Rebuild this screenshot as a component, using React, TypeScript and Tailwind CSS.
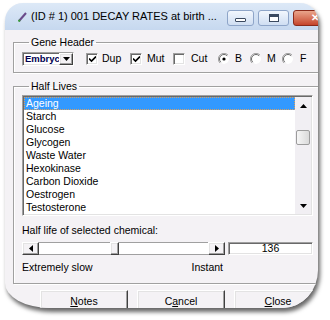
import React from 'react';

const items = [
  'Ageing',
  'Starch',
  'Glucose',
  'Glycogen',
  'Waste Water',
  'Hexokinase',
  'Carbon Dioxide',
  'Oestrogen',
  'Testosterone',
];

// classic sunken 3d edge
const sunken =
  'border border-t-[#a0a0a0] border-l-[#a0a0a0] border-r-white border-b-white shadow-[inset_1px_1px_0_#696969,inset_-1px_-1px_0_#e3e3e3]';
// classic raised 3d edge
const raised =
  'border border-t-white border-l-white border-r-[#404040] border-b-[#404040] shadow-[inset_-1px_-1px_0_#a0a0a0,inset_1px_1px_0_#e3e3e3]';

const Check = ({ checked }: { checked?: boolean }) => (
  <span className={`shrink-0 w-[12px] h-[12px] bg-white flex items-center justify-center ${sunken}`}>
    {checked && (
      <svg width="7" height="7" viewBox="0 0 7 7">
        <path d="M0 2.5 L2.5 5 L7 0.5" stroke="#000" strokeWidth="1.6" fill="none" />
      </svg>
    )}
  </span>
);

const Radio = ({ checked }: { checked?: boolean }) => (
  <svg width="12" height="12" viewBox="0 0 12 12" className="shrink-0">
    <circle cx="6" cy="6" r="5" fill="#fff" />
    <path d="M10 2 A5.5 5.5 0 0 0 2 10" stroke="#a0a0a0" strokeWidth="1" fill="none" />
    <path d="M9.2 2.8 A4.5 4.5 0 0 0 2.8 9.2" stroke="#696969" strokeWidth="1" fill="none" />
    <path d="M2 10 A5.5 5.5 0 0 0 10 2" stroke="#f4f2f5" strokeWidth="1" fill="none" />
    {checked && <circle cx="6" cy="6" r="1.6" fill="#000" />}
  </svg>
);

const Tri = ({ dir }: { dir: 'up' | 'down' | 'left' | 'right' }) => {
  const d = {
    up: 'M3.5 0 L7 4 L0 4 Z',
    down: 'M0 0 L7 0 L3.5 4 Z',
    left: 'M4 0 L4 7 L0 3.5 Z',
    right: 'M0 0 L4 3.5 L0 7 Z',
  }[dir];
  const vert = dir === 'up' || dir === 'down';
  return (
    <svg width={vert ? 7 : 4} height={vert ? 4 : 7} viewBox={vert ? '0 0 7 4' : '0 0 4 7'}>
      <path d={d} fill="#000" />
    </svg>
  );
};

const Btn = ({ children }: { children: React.ReactNode }) => (
  <div className={`w-[88px] h-[23px] flex items-center justify-center bg-[#f4f2f5] ${raised}`}>
    {children}
  </div>
);

export default function App() {
  return (
    <div className="w-[330px] h-[320px] bg-white overflow-hidden font-['Liberation_Sans',Arial,sans-serif] text-[10.5px] text-black">
      <div className="ml-[5px] mt-[3px] w-[313px] h-[305px] overflow-hidden bg-[#f4f2f5] rounded-tl-[18px] rounded-tr-[18px] rounded-bl-[45px_25px] rounded-br-[35px_38px] shadow-[2px_4px_4px_rgba(0,0,0,0.6)]">
        <div className="w-[331px]">
          {/* Title bar */}
          <div className="h-[27px] bg-linear-to-b from-[#dde9f7] to-[#c6d8ef] flex items-center">
            <svg width="9" height="10" viewBox="0 0 9 10" className="ml-[13px]">
              <path d="M8 1 L1 9" stroke="#6a4a8a" strokeWidth="2" />
              <path d="M2 8 L0.5 9.5" stroke="#3a9a3a" strokeWidth="2" />
            </svg>
            <span className="ml-[4px] text-[11px] whitespace-nowrap">(ID # 1) 001 DECAY RATES at birth ...</span>
            <div className="ml-auto flex items-start gap-[4px] self-start mt-[7px]">
              <div className="w-[27px] h-[16px] rounded-[3px] border border-[#8ea5c8] bg-linear-to-b from-[#f2f7fd] to-[#cfdef2] flex items-end justify-center pb-[3px]">
                <div className="w-[11px] h-[4px] border border-[#3b4a60] bg-white rounded-[1px]" />
              </div>
              <div className="w-[31px] h-[16px] rounded-[3px] border border-[#8ea5c8] bg-linear-to-b from-[#f2f7fd] to-[#cfdef2] flex items-center justify-center">
                <div className="w-[10px] h-[8px] border border-[#3b4a60] bg-white shadow-[inset_0_2px_0_#3b4a60]" />
              </div>
              <div className="w-[43px] h-[16px] rounded-[3px] border border-[#8a2a1a] bg-linear-to-b from-[#e9a58c] to-[#c5432a] flex items-center justify-center">
                <span className="text-white font-bold text-[10px] leading-none">✕</span>
              </div>
            </div>
          </div>

          {/* Body */}
          <div className="px-[8px] pt-[6px]">
            <fieldset className="border border-[#a0a0a0] shadow-[1px_1px_0_#fff,inset_1px_1px_0_#fff] w-[309px] px-[8px] pb-[6px]">
              <legend className="ml-[7px] px-[2px] leading-[13px]">Gene Header</legend>
              <div className="mt-[3px] h-[14px] flex items-center">
                <div className={`w-[52px] h-[14px] bg-white flex items-center ${sunken}`}>
                  <span className="pl-[2px] font-bold text-[9.5px] text-[#000050] flex-1 overflow-hidden whitespace-nowrap leading-none">Embryc</span>
                  <div className={`w-[14px] h-[12px] flex items-center justify-center bg-[#f4f2f5] ${raised}`}>
                    <Tri dir="down" />
                  </div>
                </div>
                <div className="ml-[12px] w-[44px] flex items-center gap-[4px]">
                  <Check checked />
                  <span>Dup</span>
                </div>
                <div className="w-[43px] flex items-center gap-[5px]">
                  <Check checked />
                  <span>Mut</span>
                </div>
                <div className="w-[45px] flex items-center gap-[6px]">
                  <Check />
                  <span>Cut</span>
                </div>
                <div className="w-[32px] flex items-center gap-[5px]">
                  <Radio checked />
                  <span>B</span>
                </div>
                <div className="w-[32px] flex items-center gap-[5px]">
                  <Radio />
                  <span>M</span>
                </div>
                <div className="w-[32px] flex items-center gap-[6px]">
                  <Radio />
                  <span>F</span>
                </div>
              </div>
            </fieldset>

            <fieldset className="mt-[7px] border border-[#a0a0a0] shadow-[1px_1px_0_#fff,inset_1px_1px_0_#fff] w-[309px] px-[8px] pb-[9px]">
              <legend className="ml-[7px] px-[2px] leading-[13px]">Half Lives</legend>
              <div className={`mt-[2px] w-[291px] h-[121px] bg-white flex p-[1px] ${sunken}`}>
                <div className="flex-1">
                  {items.map((it, i) => (
                    <div
                      key={it}
                      className={`h-[13px] leading-[13px] pl-[2px] whitespace-nowrap ${
                        i === 0 ? 'bg-[#3399ff] text-white outline-1 outline-dotted outline-[#d9a060] -outline-offset-1' : ''
                      }`}
                    >
                      {it}
                    </div>
                  ))}
                </div>
                <div className="w-[16px] bg-[#f1eff3] flex flex-col items-center">
                  <div className="h-[17px] flex items-center justify-center">
                    <Tri dir="up" />
                  </div>
                  <div className="flex-1 w-full px-[1px]">
                    <div className="mt-[16px] h-[15px] rounded-[2px] border border-[#9c9c9c] bg-linear-to-r from-[#f6f6f6] to-[#dadada]" />
                  </div>
                  <div className="h-[17px] flex items-center justify-center">
                    <Tri dir="down" />
                  </div>
                </div>
              </div>

              <div className="mt-[8px] leading-[13px]">Half life of selected chemical:</div>

              <div className="mt-[5px] flex items-center">
                <div className="w-[203px] h-[13px] flex">
                  <div className={`w-[17px] flex items-center justify-center bg-[#f4f2f5] ${raised}`}>
                    <Tri dir="left" />
                  </div>
                  <div className="w-[71px] bg-white border-y border-[#a0a0a0]" />
                  <div className={`w-[9px] bg-[#f4f2f5] ${raised}`} />
                  <div className="flex-1 bg-white border-y border-[#a0a0a0]" />
                  <div className={`w-[17px] flex items-center justify-center bg-[#f4f2f5] ${raised}`}>
                    <Tri dir="right" />
                  </div>
                </div>
                <div className={`ml-[3px] w-[85px] h-[13px] bg-white flex items-center justify-center leading-none ${sunken}`}>
                  136
                </div>
              </div>

              <div className="mt-[6px] w-[201px] flex justify-between leading-[13px]">
                <span>Extremely slow</span>
                <span>Instant</span>
              </div>
            </fieldset>

            <div className="mt-[6px] pl-[27px] flex gap-[9px]">
              <Btn>
                <span><u>N</u>otes</span>
              </Btn>
              <Btn>
                <span>C<u>a</u>ncel</span>
              </Btn>
              <Btn>
                <span><u>C</u>lose</span>
              </Btn>
            </div>
          </div>
        </div>
      </div>
    </div>
  );
}
